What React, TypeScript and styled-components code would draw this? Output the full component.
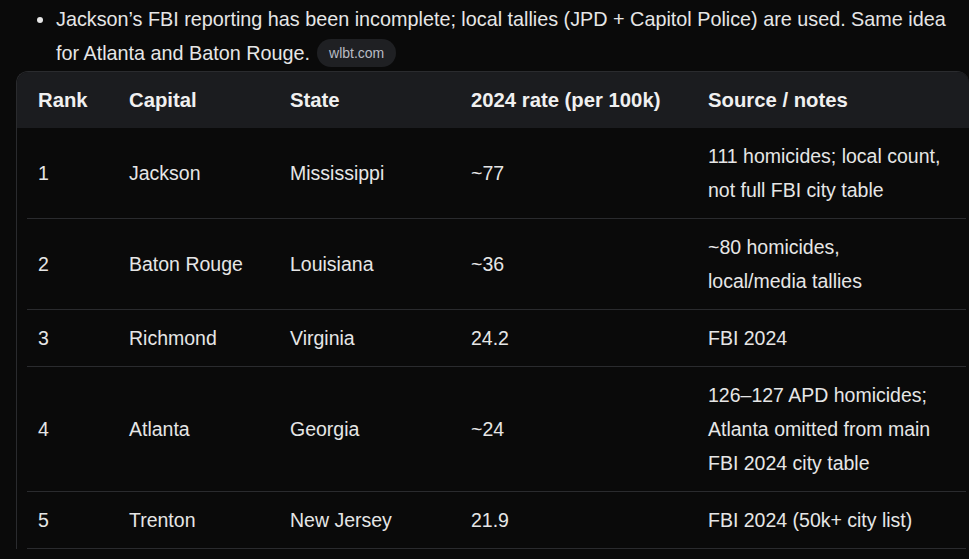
import React from "react";
import styled, { createGlobalStyle } from "styled-components";

const Global = createGlobalStyle`
  html, body { margin: 0; padding: 0; background: #0a0a0a; }
  body {
    font-family: "Liberation Sans", Arial, sans-serif;
    color: #e6e6e6;
    -webkit-font-smoothing: antialiased;
  }
`;

const Page = styled.div`
  padding: 2px 0 0 16px;
  width: 953px;
`;

const List = styled.ul`
  margin: 0;
  padding: 0;
  list-style: none;
`;

const Item = styled.li`
  display: flex;
  font-size: 19.8px;
  line-height: 34px;
`;

const Marker = styled.span`
  flex: 0 0 40px;
  display: flex;
  justify-content: flex-end;
  padding-right: 13px;
  box-sizing: border-box;
  &::before {
    content: "";
    width: 6px;
    height: 6px;
    border-radius: 50%;
    background: #e6e6e6;
    margin-top: 15px;
  }
`;

const ItemText = styled.span`
  flex: 1;
  max-width: 910px;
`;

const Chip = styled.span`
  display: inline-flex;
  align-items: center;
  height: 28px;
  padding: 0 12px;
  margin-left: 7px;
  border-radius: 14px;
  background: #1f2023;
  color: #b8bcc4;
  font-size: 14px;
  line-height: 28px;
  vertical-align: middle;
  transform: translateY(-2px);
`;

const TableBox = styled.div`
  margin-top: 1px;
  width: 952px;
  border: 1px solid #2a2b2e;
  border-bottom: none;
  border-right: none;
  border-radius: 12px 12px 0 0;
  overflow: hidden;
`;

const cols = "91px 161px 181px 237px 268px";

const HeadRow = styled.div`
  display: grid;
  grid-template-columns: ${cols};
  padding: 0 3px 0 10px;
  background: #1b1c1f;
`;

const HeadCell = styled.div`
  padding: 11px 11px;
  font-size: 20.3px;
  line-height: 34px;
  font-weight: 700;
  color: #f0f0f0;
  white-space: nowrap;
`;

const Body = styled.div`
  padding: 0 3px 0 10px;
`;

const Row = styled.div`
  display: grid;
  grid-template-columns: ${cols};
  align-items: center;
  border-bottom: 1px solid #2a2b2e;
`;

const Cell = styled.div`
  padding: 11px 11px;
  font-size: 19.5px;
  line-height: 34px;
  color: #e6e6e6;
`;

const Line = styled.span`
  display: block;
  white-space: nowrap;
`;

type RowData = { rank: string; capital: string; state: string; rate: string; notes: string[] };

const rows: RowData[] = [
  { rank: "1", capital: "Jackson", state: "Mississippi", rate: "~77", notes: ["111 homicides; local count,", "not full FBI city table"] },
  { rank: "2", capital: "Baton Rouge", state: "Louisiana", rate: "~36", notes: ["~80 homicides,", "local/media tallies"] },
  { rank: "3", capital: "Richmond", state: "Virginia", rate: "24.2", notes: ["FBI 2024"] },
  { rank: "4", capital: "Atlanta", state: "Georgia", rate: "~24", notes: ["126–127 APD homicides;", "Atlanta omitted from main", "FBI 2024 city table"] },
  { rank: "5", capital: "Trenton", state: "New Jersey", rate: "21.9", notes: ["FBI 2024 (50k+ city list)"] },
];

export default function App() {
  return (
    <>
      <Global />
      <Page>
        <List>
          <Item>
            <Marker />
            <ItemText>
              Jackson’s FBI reporting has been incomplete; local tallies (JPD + Capitol Police) are used. Same idea for Atlanta and Baton Rouge.
              <Chip>wlbt.com</Chip>
            </ItemText>
          </Item>
        </List>
        <TableBox>
          <HeadRow>
            <HeadCell>Rank</HeadCell>
            <HeadCell>Capital</HeadCell>
            <HeadCell>State</HeadCell>
            <HeadCell>2024 rate (per 100k)</HeadCell>
            <HeadCell>Source / notes</HeadCell>
          </HeadRow>
          <Body>
            {rows.map((r) => (
              <Row key={r.rank}>
                <Cell>{r.rank}</Cell>
                <Cell>{r.capital}</Cell>
                <Cell>{r.state}</Cell>
                <Cell>{r.rate}</Cell>
                <Cell>
                  {r.notes.map((n, i) => (
                    <Line key={i}>{n}</Line>
                  ))}
                </Cell>
              </Row>
            ))}
          </Body>
        </TableBox>
      </Page>
    </>
  );
}
